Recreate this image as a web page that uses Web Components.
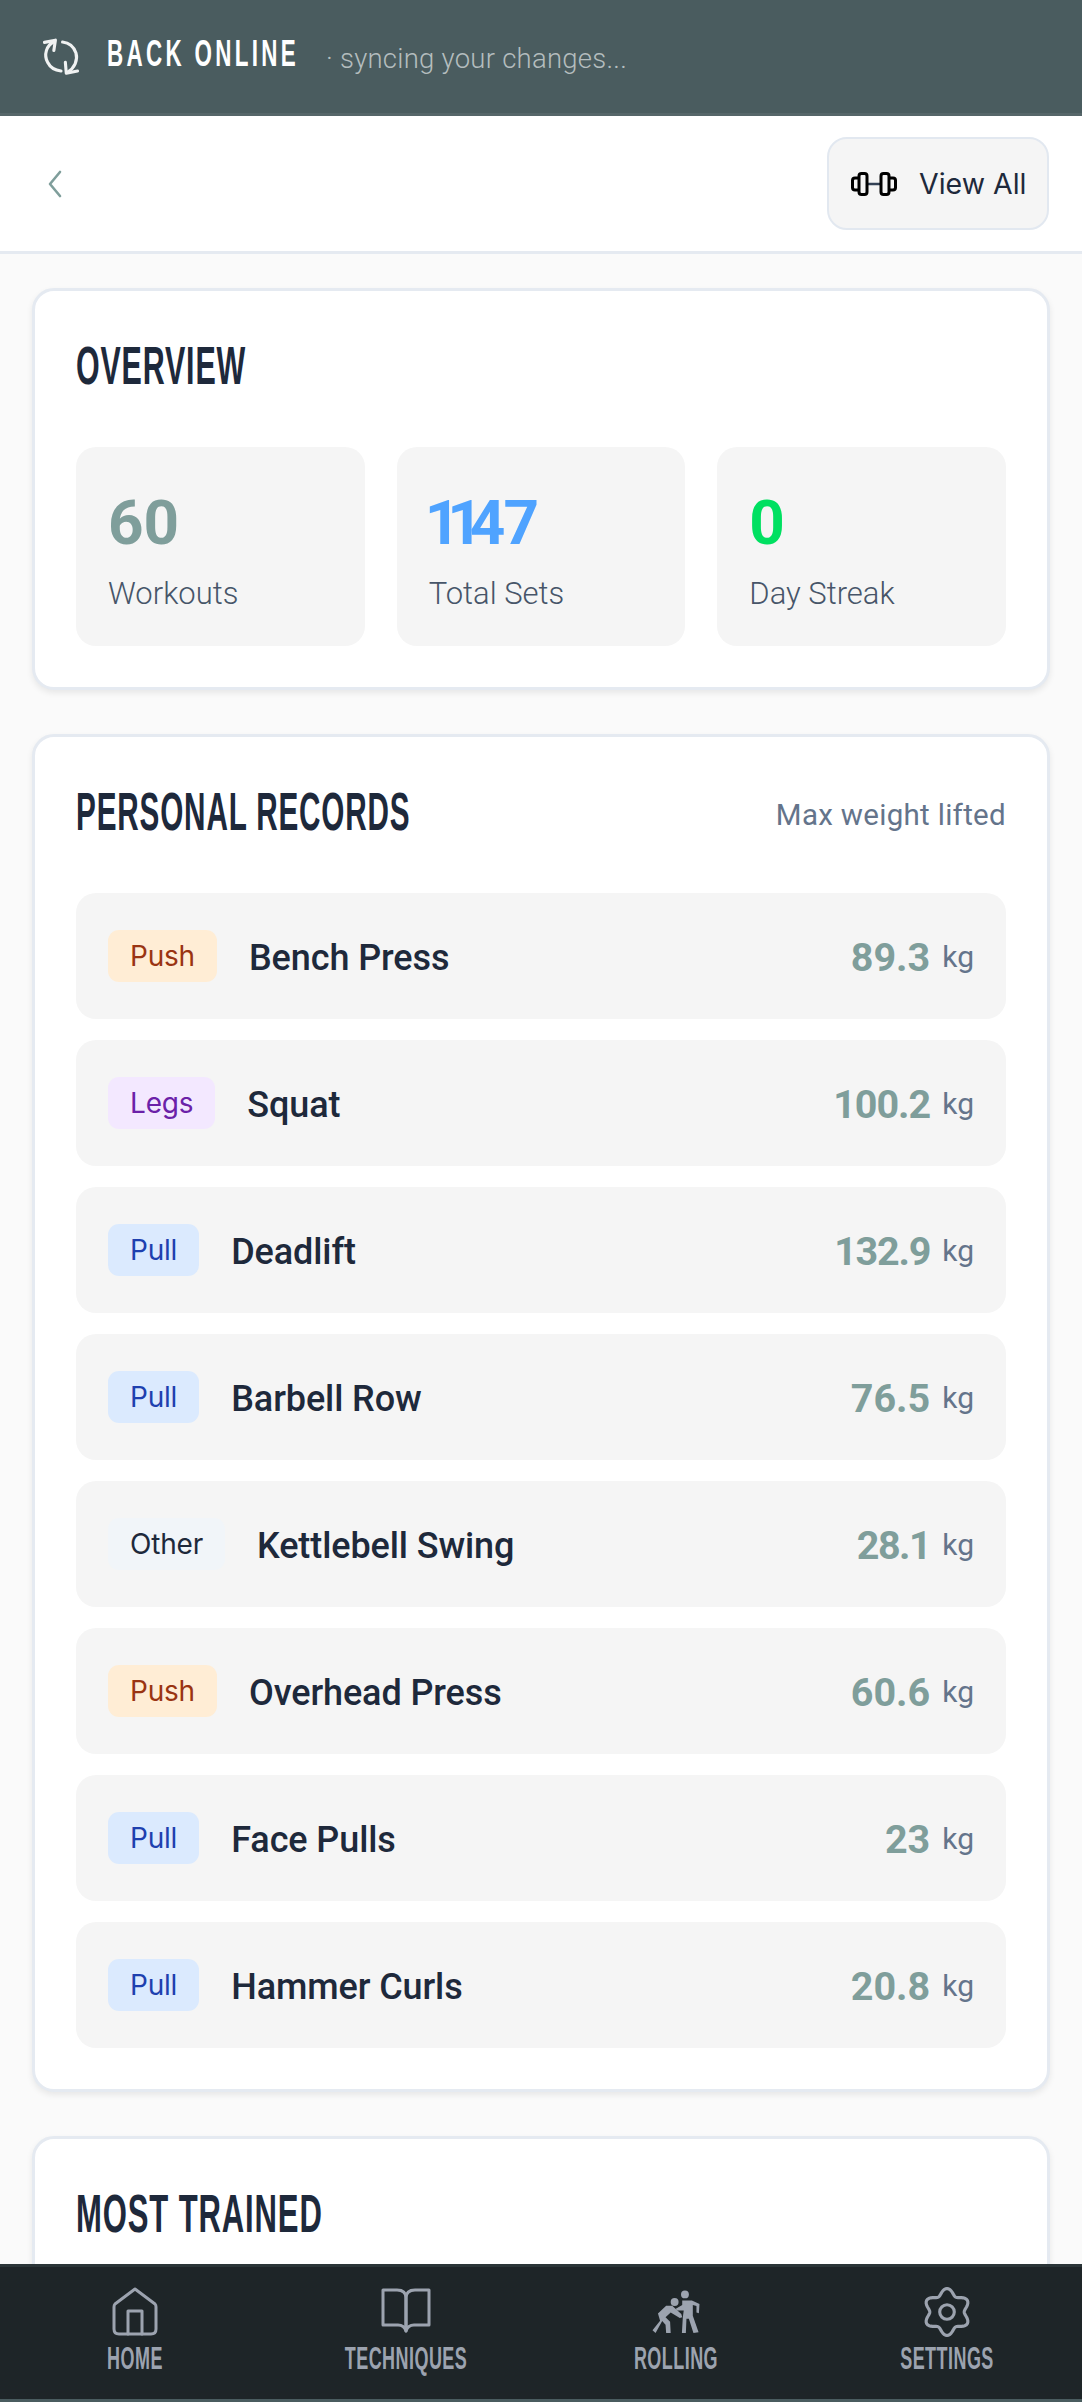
<!DOCTYPE html>
<html><head><meta charset="utf-8"><style>
html,body{margin:0;padding:0;height:100%;}
body{width:1082px;height:2402px;overflow:hidden;background:#fafafa;font-family:Roboto,sans-serif;}
</style></head><body>
<x-app></x-app>
<template id="t-app"><style>
:host{display:flex;flex-direction:column;height:2402px;overflow:hidden}
.main{flex:1;min-height:0;overflow:hidden;padding:34px 32px 0;display:flex;flex-direction:column;gap:44px;background:#fafafa}
</style>
<x-banner></x-banner><x-topbar></x-topbar>
<div class="main">
<x-card title="OVERVIEW" tw="170" sx=".563"><x-stats></x-stats></x-card>
<x-card title="PERSONAL RECORDS" note="Max weight lifted" tw="334" sx=".55"><x-records></x-records></x-card>
<x-card title="MOST TRAINED" tw="245" sx=".575"></x-card>
</div>
<x-nav></x-nav>
</template>
<script>
const T=(h,html)=>{h.attachShadow({mode:'open'}).innerHTML=html;};
const COND="font-family:'Liberation Sans',sans-serif;font-weight:700;";
customElements.define('x-app',class extends HTMLElement{connectedCallback(){this.attachShadow({mode:'open'}).appendChild(document.getElementById('t-app').content.cloneNode(true));}});
customElements.define('x-cond',class extends HTMLElement{connectedCallback(){
 const w=this.getAttribute('w'),s=this.getAttribute('size'),l=this.getAttribute('ls')||0,c=this.getAttribute('center')!=null;
 T(this,`<style>:host{display:inline-block;width:${w}px;height:${Math.round(s*1.1)}px;line-height:${Math.round(s*1.1)}px;white-space:nowrap;overflow:visible}
 span{display:inline-block;${COND}font-size:${s}px;letter-spacing:${l}px;transform-origin:${c?'center':'left'} center;${c?'margin-left:50%;translate:-50% 0;':''}}</style><span id="s"><slot></slot></span>`);
 const sp=this.shadowRoot.getElementById('s');sp.style.transform=`scaleX(${this.getAttribute('sx')||1})`;
}});
customElements.define('x-banner',class extends HTMLElement{connectedCallback(){T(this,`<style>
:host{display:flex;align-items:center;height:113px;background:#4a5c5f;border-bottom:3px solid #566669;padding-left:42px;box-sizing:content-box;color:#fff}
svg{width:38px;height:38px;flex:none}
.t{margin-left:27px;margin-top:-6px}
.s{margin-left:27px;color:#b4bdbe;font:300 27.500px Roboto,sans-serif;letter-spacing:.25px;margin-top:3px}
</style>
<svg viewBox="-6 -6 122 122" fill="none" stroke="#f0f2f2" stroke-width="10" stroke-linecap="round" stroke-linejoin="round"><path d="M32 6 C8 18 -1 48 12 72 C20 88 36 98 55 100"/><path d="M2 8 L37 1 L32 34"/><path d="M60 7 C80 9 96 22 103 42 C110 66 98 90 76 104"/><path d="M108 100 L72 107 L69 72"/></svg>
<x-cond class="t" w="192" size="37" sx=".605" ls="5.500">BACK ONLINE</x-cond>
<span class="s">· syncing your changes...</span>`);}});
customElements.define('x-topbar',class extends HTMLElement{connectedCallback(){T(this,`<style>
:host{display:flex;align-items:center;justify-content:space-between;height:135px;background:#fff;border-bottom:3px solid #e5eaf1;padding:0 33px 0 48px;box-sizing:content-box}
.b{display:flex;align-items:center;gap:22px;height:93px;width:222px;box-sizing:border-box;padding-left:22px;background:#f5f5f5;border:2px solid #e2e8f0;border-radius:20px;font:400 28.500px Inter,sans-serif;color:#1e293b}
</style>
<svg width="14" height="28" viewBox="0 0 14 28" fill="none" stroke="#7f9e9b" stroke-width="2.600" stroke-linecap="round" stroke-linejoin="round"><path d="M12 2 L2 14 L12 26"/></svg>
<div class="b"><svg width="46" height="24" viewBox="0 0 46 24" fill="none" stroke="#000" stroke-width="3" stroke-linejoin="round"><path d="M16 12H30" stroke="#334155" stroke-width="2.500"/><rect x="8" y="1.500" width="8" height="21" rx="2.500"/><rect x="30" y="1.500" width="8" height="21" rx="2.500"/><path d="M8 6H4Q1.500 6 1.500 8.500V15.500Q1.500 18 4 18H8M38 6H42Q44.500 6 44.500 8.500V15.500Q44.500 18 42 18H38"/></svg><span>View All</span></div>`);}});
customElements.define('x-card',class extends HTMLElement{connectedCallback(){
const n=this.getAttribute('note'),tw=this.getAttribute('tw');
T(this,`<style>
:host{display:block;background:#fff;border:3px solid #e5eaf1;border-radius:22px;padding:41px 41px 41px;box-shadow:0 3px 6px rgba(0,0,0,.08);flex:none;color:#1e293b}
.h{display:flex;align-items:center;justify-content:space-between;height:70px;margin-bottom:45px}
.ti{margin-top:-3px}
.n{font:400 29.500px Roboto,sans-serif;color:#64748b;letter-spacing:.3px;margin-top:4px}
</style><div class="h"><x-cond class="ti" w="${tw}" size="54" sx="${this.getAttribute('sx')}" ls="1.500">${this.getAttribute('title')}</x-cond>${n?`<span class="n">${n}</span>`:''}</div><slot></slot>`);
}});
customElements.define('x-stats',class extends HTMLElement{connectedCallback(){
const c=(v,l,col)=>`<div class="c"><div class="v" style="color:${col}">${v}</div><div class="l">${l}</div></div>`;
T(this,`<style>:host{display:grid;grid-template-columns:repeat(3,1fr);gap:32px}
.c{height:199px;box-sizing:border-box;background:#f5f5f5;border-radius:20px;padding:45px 32px 0}
.v{font:700 62px/62px Roboto,sans-serif}
.v span{letter-spacing:-13px}
.v i{font-style:normal;letter-spacing:-2px}
.l{font:300 31px/36px Roboto,sans-serif;color:#475569;margin-top:22px}
</style>${c(60,'Workouts','#7f9e9b')}${c('<span style="margin-left:-4px">11</span><i>4</i>7','Total Sets','#4fa3ff')}${c(0,'Day Streak','#00e061')}`);}});
const CAT={Push:['#ffedd5','#9a3412'],Legs:['#f3e8ff','#6b21a8'],Pull:['#dbeafe','#1e40af'],Other:['#f1f5f9','#1e293b']};
customElements.define('x-records',class extends HTMLElement{connectedCallback(){
const D=[['Push','Bench Press','89.3',0],['Legs','Squat','100.2',-1],['Pull','Deadlift','132.9',-1.200],['Pull','Barbell Row','76.5',0],['Other','Kettlebell Swing','28.1',-1.500],['Push','Overhead Press','60.6',0],['Pull','Face Pulls','23',0],['Pull','Hammer Curls','20.8',0]];
T(this,`<style>:host{display:flex;flex-direction:column;gap:21px}</style>`+D.map(d=>`<x-row cat="${d[0]}" name="${d[1]}" val="${d[2]}" sp="${d[3]}"></x-row>`).join(''));}});
customElements.define('x-row',class extends HTMLElement{connectedCallback(){
const cat=this.getAttribute('cat'),[bg,fg]=CAT[cat];
T(this,`<style>:host{display:flex;align-items:center;height:126px;box-sizing:border-box;background:#f5f5f5;border-radius:20px;padding:0 32px}
.b{height:52px;padding:0 22px;border-radius:11px;background:${bg};color:${fg};font:400 28px/52px Inter,sans-serif;letter-spacing:-.2px}
.n{margin-left:32px;margin-top:3px;font:500 36px Roboto,sans-serif;color:#1e293b;flex:1;letter-spacing:-.1px}
.v{margin-top:2px;font:700 39.500px Roboto,sans-serif;color:#7f9e9b;letter-spacing:${this.getAttribute('sp')}px}
.k{margin-left:12px;font:400 30px Roboto,sans-serif;color:#64748b}
</style><span class="b">${cat}</span><span class="n">${this.getAttribute('name')}</span><span class="v">${this.getAttribute('val')}</span><span class="k">kg</span>`);}});
function gear(){let d='';const N=96;for(let i=0;i<=N;i++){const a=i/N*Math.PI*2-Math.PI/2;const r=19.500+3*Math.cos(6*(a+Math.PI/2));d+=(i?'L':'M')+(24+r*Math.cos(a)).toFixed(2)+' '+(24+r*Math.sin(a)).toFixed(2);}return d+'Z';}
const ICONS={
home:`<svg viewBox="0 0 48 50" fill="none" stroke="#9ca3af" stroke-width="3" stroke-linejoin="round" stroke-linecap="round"><path d="M24 2 L44 17 Q45 18 45 20 V42 Q45 47 40 47 H8 Q3 47 3 42 V20 Q3 18 4 17 Z"/><path d="M17 47 V24 H31 V47"/></svg>`,
book:`<svg viewBox="0 0 48 50" fill="none" stroke="#9ca3af" stroke-width="3" stroke-linejoin="round"><path d="M1 3 H15 Q24 3 24 11 V44 Q22 38 16 38 H1 Z"/><path d="M47 3 H33 Q24 3 24 11 V44 Q26 38 32 38 H47 Z"/></svg>`,
roll:`<svg viewBox="55 48 165 150" fill="#9ca3af"><circle cx="167" cy="65" r="13"/><circle cx="133" cy="90" r="13"/><path d="M158 85H190L215 97L213 127L205 125V103L193 100V135L212 190L195 192L180 145H172L170 192H157L160 140L163 118H140L137 112L158 100Z"/><path d="M78 128L105 102H125L155 130L158 140L150 143L120 125L103 140L118 155L120 192H105L103 165L92 153L70 192L60 183L85 152Z"/></svg>`,
gear:`<svg viewBox="0 0 48 48" fill="none" stroke="#9ca3af" stroke-width="3" stroke-linejoin="round"><path d="${gear()}"/><circle cx="24" cy="24" r="7"/></svg>`};
customElements.define('x-nav',class extends HTMLElement{connectedCallback(){
const it=(ic,l,w)=>`<div class="i"><div class="ic">${ICONS[ic]}</div><x-cond center w="${w}" size="31" sx=".58" ls=".8" style="color:#9ca3af">${l}</x-cond></div>`;
T(this,`<style>:host{display:grid;grid-template-columns:repeat(4,1fr);background:#1e2528;border-top:3px solid #2b3538;border-bottom:3px solid #4a5c5f;box-sizing:border-box;flex:none;height:138px;}
.i{display:flex;flex-direction:column;align-items:center;padding-top:20px}
.ic{height:50px;width:54px;display:flex;align-items:center;justify-content:center;margin-bottom:5px}
svg{width:50px;height:50px}
</style>${it('home','HOME',60)}${it('book','TECHNIQUES',125)}${it('roll','ROLLING',85)}${it('gear','SETTINGS',97)}`);}});
</script>
</body></html>
